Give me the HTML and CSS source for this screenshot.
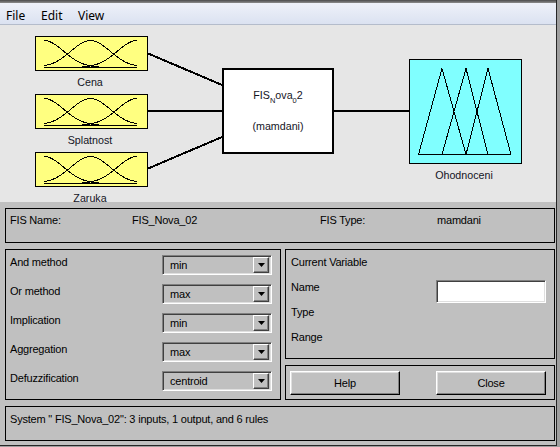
FILE: index.html
```html
<!DOCTYPE html>
<html>
<head>
<meta charset="utf-8">
<title>FIS Editor</title>
<link rel="stylesheet" href="styles.css">
</head>
<body>
<svg class="defs" width="0" height="0" aria-hidden="true">
  <defs>
    <symbol id="gauss" viewBox="0 0 113 35">
      <rect x="0.5" y="0.5" width="112" height="34" fill="#ffff80" stroke="#000"/>
      <g fill="none" stroke="#000" stroke-width="1" shape-rendering="crispEdges">
        <polyline points="9,4.5 11.5,4.7 14,5.4 16.5,6.4 19,7.8 21.5,9.5 24,11.4 26.5,13.4 29,15.5 31.5,17.6 34,19.6 36.5,21.5 39,23.2 41.5,24.7 44,26.1 46.5,27.2 49,28.2 52,29.1 55.5,29.9 60,30.5 64,31 70,31.3 79,31.5 102,31.5"/>
        <polyline points="9,29.9 12,29.1 15.5,28.2 18,27.2 20.5,26.1 23,24.7 25.5,23.2 28,21.5 30.5,19.6 33,17.6 35.5,15.5 38,13.4 40.5,11.4 43,9.5 45.5,7.8 48,6.4 50.5,5.4 53,4.7 55.5,4.5 58,4.7 60.5,5.4 63,6.4 65.5,7.8 68,9.5 70.5,11.4 73,13.4 75.5,15.5 78,17.6 80.5,19.6 83,21.5 85.5,23.2 88,24.7 90.5,26.1 93,27.2 95.5,28.2 99,29.1 102,29.9"/>
        <polyline points="9,31.5 32,31.5 41,31.3 47,31 51,30.5 55.5,29.9 59,29.1 62,28.2 64.5,27.2 67,26.1 69.5,24.7 72,23.2 74.5,21.5 77,19.6 79.5,17.6 82,15.5 84.5,13.4 87,11.4 89.5,9.5 92,7.8 94.5,6.4 97,5.4 99.5,4.7 102,4.5"/>
        <line x1="9" y1="31.5" x2="102" y2="31.5"/>
      </g>
    </symbol>
    <symbol id="tri" viewBox="0 0 113 105">
      <rect x="0.5" y="0.5" width="112" height="104" fill="#80ffff" stroke="#000"/>
      <g fill="none" stroke="#000" stroke-width="1" shape-rendering="crispEdges">
        <polyline points="9.5,95.5 33,9.5 57,95.5"/>
        <polyline points="33,95.5 57,9.5 79,95.5"/>
        <polyline points="57,95.5 79,9.5 102,95.5"/>
        <line x1="9" y1="95.5" x2="102" y2="95.5"/>
      </g>
    </symbol>
  </defs>
</svg>
<div class="window">
  <div class="titlestrip"></div>
  <div class="menubar">
    <span class="menu m-file">File</span>
    <span class="menu m-edit">Edit</span>
    <span class="menu">View</span>
  </div>
  <div class="diagram">
    <svg class="wires" width="556" height="177">
      <g stroke="#000" stroke-width="2" shape-rendering="crispEdges">
        <line x1="147" y1="28" x2="222" y2="60"/>
        <line x1="147" y1="86" x2="222" y2="86"/>
        <line x1="147" y1="144" x2="222" y2="112"/>
        <line x1="334" y1="86" x2="409" y2="86"/>
      </g>
    </svg>
    <div class="node n-cena">
      <svg class="mf-in" width="113" height="35"><use href="#gauss"/></svg>
      <div class="node-label">Cena</div>
    </div>
    <div class="node n-splatnost">
      <svg class="mf-in" width="113" height="35"><use href="#gauss"/></svg>
      <div class="node-label">Splatnost</div>
    </div>
    <div class="node n-zaruka">
      <svg class="mf-in" width="113" height="35"><use href="#gauss"/></svg>
      <div class="node-label">Zaruka</div>
    </div>
    <div class="fis-node">
      <div class="fis-title">FIS<sub>N</sub>ova<sub>0</sub>2</div>
      <div class="fis-type">(mamdani)</div>
    </div>
    <div class="node n-out">
      <svg class="mf-out" width="113" height="105"><use href="#tri"/></svg>
      <div class="node-label">Ohodnoceni</div>
    </div>
  </div>
  <div class="lower">
    <div class="panel fis-info">
      <span class="c1">FIS Name:</span>
      <span class="c2">FIS_Nova_02</span>
      <span class="c3">FIS Type:</span>
      <span>mamdani</span>
    </div>
    <div class="main-row">
      <div class="panel methods">
        <div class="method-row">
          <span class="method-label">And method</span>
          <div class="select"><span>min</span><span class="select-btn"><svg width="7" height="4"><polygon points="0,0 7,0 3.5,4" fill="#000"/></svg></span></div>
        </div>
        <div class="method-row">
          <span class="method-label">Or method</span>
          <div class="select"><span>max</span><span class="select-btn"><svg width="7" height="4"><polygon points="0,0 7,0 3.5,4" fill="#000"/></svg></span></div>
        </div>
        <div class="method-row">
          <span class="method-label">Implication</span>
          <div class="select"><span>min</span><span class="select-btn"><svg width="7" height="4"><polygon points="0,0 7,0 3.5,4" fill="#000"/></svg></span></div>
        </div>
        <div class="method-row">
          <span class="method-label">Aggregation</span>
          <div class="select"><span>max</span><span class="select-btn"><svg width="7" height="4"><polygon points="0,0 7,0 3.5,4" fill="#000"/></svg></span></div>
        </div>
        <div class="method-row">
          <span class="method-label">Defuzzification</span>
          <div class="select"><span>centroid</span><span class="select-btn"><svg width="7" height="4"><polygon points="0,0 7,0 3.5,4" fill="#000"/></svg></span></div>
        </div>
      </div>
      <div class="right-col">
        <div class="panel current-var">
          <div class="var-row">Current Variable</div>
          <div class="var-row"><span>Name</span><div class="text-field"></div></div>
          <div class="var-row">Type</div>
          <div class="var-row">Range</div>
        </div>
        <div class="panel button-panel">
          <div class="btn">Help</div>
          <div class="btn">Close</div>
        </div>
      </div>
    </div>
    <div class="panel status">System " FIS_Nova_02": 3 inputs, 1 output, and 6 rules</div>
  </div>
</div>
</body>
</html>
```

FILE: styles.css
```css
html, body {
  margin: 0;
  padding: 0;
}

body {
  width: 560px;
  height: 447px;
  overflow: hidden;
  background: #9e9e9e;
}

.defs {
  display: block;
  width: 0;
  height: 0;
  overflow: hidden;
}

.window {
  width: 556px;
  height: 445px;
  border-right: 1px solid #262626;
  border-bottom: 1px solid #262626;
  display: flex;
  flex-direction: column;
  background: #c0c0c0;
}

.titlestrip {
  height: 3px;
  flex: none;
  background: linear-gradient(#4a4a4a, #8c8c8c);
}

.menubar {
  flex: none;
  height: 22px;
  box-sizing: border-box;
  padding: 4px 0 0 6px;
  border-bottom: 1px solid #b4bccb;
  background: linear-gradient(#eef1f9, #dbe2f1);
  display: flex;
  align-items: center;
  font: 12px "Noto Sans", "Liberation Sans", sans-serif;
  color: #000;
}

.menu.m-file { width: 35px; }
.menu.m-edit { width: 37px; }

.diagram {
  flex: none;
  position: relative;
  height: 177px;
  background: #e6e6e6;
  overflow: hidden;
  font: 10.7px "Liberation Sans", Arial, sans-serif;
  color: #14141e;
}

.wires {
  position: absolute;
  left: 0;
  top: 0;
}

.node {
  position: absolute;
  width: 113px;
  display: flex;
  flex-direction: column;
  align-items: center;
}

.node svg {
  display: block;
}

.node-label {
  margin-top: 5px;
  line-height: 13px;
  padding-right: 3px;
}

.n-cena { left: 35px; top: 11px; }
.n-splatnost { left: 35px; top: 69px; }
.n-zaruka { left: 35px; top: 127px; }
.n-out { left: 409px; top: 34px; }

.fis-node {
  position: absolute;
  left: 222px;
  top: 43px;
  width: 112px;
  height: 86px;
  box-sizing: border-box;
  border: 2px solid #000;
  background: #fff;
  display: flex;
  flex-direction: column;
  align-items: center;
  padding-top: 19px;
  line-height: 13px;
}

.fis-title sub {
  font-size: 7.5px;
  vertical-align: -4px;
  line-height: 0;
}

.fis-type {
  margin-top: 18px;
}

.lower {
  flex: 1;
  padding: 6px 1px 0 5px;
  display: flex;
  flex-direction: column;
  gap: 6px;
  font: 11px "Liberation Sans", Arial, sans-serif;
  letter-spacing: -0.2px;
  color: #000;
}

.panel {
  border: 1px solid #000;
  box-sizing: border-box;
}

.fis-info {
  height: 35px;
  padding: 5px 0 0 4px;
  display: flex;
  line-height: 13px;
}

.c1 { width: 122px; }
.c2 { width: 188px; }
.c3 { width: 117px; }

.main-row {
  height: 151px;
  display: flex;
  gap: 4px;
}

.methods {
  width: 276px;
  padding: 5px 8px 0 4px;
  display: flex;
  flex-direction: column;
  gap: 9px;
}

.method-row {
  height: 20px;
  display: flex;
  justify-content: space-between;
}

.method-label {
  line-height: 15px;
}

.select {
  width: 110px;
  height: 20px;
  box-sizing: border-box;
  border: 1px solid;
  border-color: #808080 #ffffff #ffffff #808080;
  box-shadow: inset 1px 1px #404040, inset -1px -1px #dfdfdf;
  padding: 2px 2px 2px 7px;
  display: flex;
  align-items: center;
  justify-content: space-between;
}

.select-btn {
  width: 16px;
  height: 16px;
  box-sizing: border-box;
  border: 1px solid;
  border-color: #ffffff #404040 #404040 #ffffff;
  box-shadow: inset -1px -1px #808080;
  background: #c0c0c0;
  display: flex;
  align-items: center;
  justify-content: center;
}

.select-btn svg {
  display: block;
}

.right-col {
  width: 270px;
  display: flex;
  flex-direction: column;
  gap: 6px;
}

.current-var {
  height: 110px;
  padding: 0 8px 0 5px;
}

.var-row {
  height: 25px;
  line-height: 25px;
  display: flex;
  justify-content: space-between;
}

.text-field {
  margin-top: 5px;
  width: 110px;
  height: 23px;
  box-sizing: border-box;
  background: #fff;
  border: 1px solid;
  border-color: #808080 #ffffff #ffffff #808080;
  box-shadow: inset 1px 1px #404040, inset -1px -1px #dfdfdf;
}

.button-panel {
  height: 35px;
  padding: 5px 8px 0 4px;
  display: flex;
  justify-content: space-between;
  align-items: flex-start;
}

.btn {
  width: 110px;
  height: 24px;
  box-sizing: border-box;
  border: 1px solid;
  border-color: #ffffff #000000 #000000 #ffffff;
  box-shadow: inset -1px -1px #808080, inset 1px 1px #dfdfdf;
  background: #c0c0c0;
  display: flex;
  align-items: center;
  justify-content: center;
}

.status {
  height: 35px;
  padding: 6px 0 0 4px;
  line-height: 13px;
}
```
